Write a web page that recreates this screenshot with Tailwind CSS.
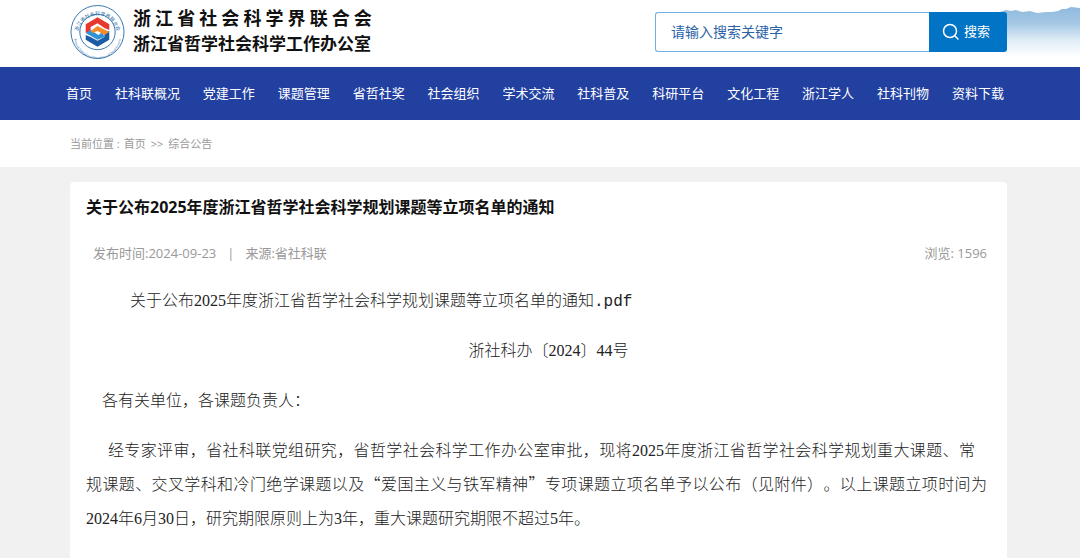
<!DOCTYPE html>
<html lang="zh-CN">
  <head>
    <meta charset="UTF-8" />
    <meta name="viewport" content="width=device-width, initial-scale=1.0" />
    <title>关于公布2025年度浙江省哲学社会科学规划课题等立项名单的通知</title>
    <script src="https://cdn.jsdelivr.net/npm/@tailwindcss/browser@4"></script>
  </head>
  <body class="min-h-screen flex flex-col bg-[#f1f1f1] text-[#111] font-['Open_Sans','Noto_Sans_CJK_SC',sans-serif]">
    <header class="relative bg-white h-[67px] pl-[70px] pr-[73px] flex justify-between">
      <!-- ink-wash hills behind the search box -->
      <svg class="absolute right-0 top-0" width="100" height="67" viewBox="0 0 100 67" aria-hidden="true">
        <defs>
          <linearGradient id="hill" x1="0" y1="0" x2="0" y2="1">
            <stop offset="0" stop-color="#8fbade" />
            <stop offset="0.3" stop-color="#a5c8e4" />
            <stop offset="0.6" stop-color="#dfecf7" />
            <stop offset="0.9" stop-color="#ffffff" />
          </linearGradient>
        </defs>
        <path fill="url(#hill)" d="M20 12 L26 10 L31 11 L36 10 L42 12 L50 11 L57 13 L66 12 L72 12 L78 11 L82 9 L86 9 L91 7 L100 8 V62 H20 Z" />
      </svg>

      <a href="#" class="relative flex gap-2 h-[60px] pt-1">
        <svg width="55" height="56" viewBox="0 0 56 56" aria-hidden="true">
          <circle cx="28" cy="28" r="27" fill="#fff" stroke="#3577ad" stroke-width="1" />
          <circle cx="28" cy="28" r="18" fill="none" stroke="#3577ad" stroke-width="1" />
          <path id="arcTop" d="M8 31 A20 20 0 1 1 48 31" fill="none" />
          <path id="arcBottom" d="M4 31 A24 24 0 0 0 52 31" fill="none" />
          <text class="font-['Noto_Sans_CJK_SC',sans-serif] text-[5px]" fill="#2a6aa5"><textPath href="#arcTop" startOffset="50%" text-anchor="middle">浙江省社会科学界联合会</textPath></text>
          <text class="font-['Liberation_Serif',serif] text-[3px]" fill="#2a6aa5"><textPath href="#arcBottom" startOffset="50%" text-anchor="middle">Zhejiang Federation of Humanities and Social Sciences</textPath></text>
          <path fill="#e5392f" d="M28 13 L40 20 V26 L35 24 L28 19 L21 23 V27 L16 29 V20 Z" />
          <path fill="#1c5ca6" d="M28 43 L16 36 V31 L21 33 L28 37 L35 33 V29 L40 27 V36 Z" />
          <path fill="#2f93d6" d="M16 29 L21 26 L29 31 L33 28 L35 33 L28 36 Z" />
          <path fill="#f58b2a" d="M21 27 L28 22 L40 28 L35 31 L28 27 L23 29 Z" />
        </svg>
        <span class="flex flex-col text-[#111] font-bold font-['Noto_Sans_CJK_SC',sans-serif] whitespace-nowrap">
          <span class="text-[18px] leading-[26px]">浙 江 省 社 会 科 学 界 联 合 会</span>
          <span class="text-[17px] leading-[25px]">浙江省哲学社会科学工作办公室</span>
        </span>
      </a>

      <form class="relative mt-3 w-[352px] h-10 flex" onsubmit="return false">
        <input type="text" aria-label="搜索关键字" placeholder="请输入搜索关键字" class="flex-1 min-w-0 px-[15px] text-sm bg-white border border-r-0 border-[#6fb2e0] rounded-l-[3px] placeholder:text-[#2a62a8] focus:outline-none" />
        <button type="submit" class="w-[78px] pr-1 flex items-center justify-center gap-1 bg-[#0274c5] text-white text-[13px] rounded-r-[3px]">
          <svg width="18" height="18" viewBox="0 0 18 18" fill="none" stroke="currentColor" stroke-width="1.5" stroke-linecap="round" aria-hidden="true">
            <circle cx="8" cy="8" r="6.5" />
            <path d="M13 13 L16 16" />
          </svg>
          搜索
        </button>
      </form>
    </header>

    <nav class="bg-[#22409f] h-[53px] pl-[66px] pr-[76px] flex items-center justify-between text-[13px] text-white whitespace-nowrap">
      <a href="#">首页</a>
      <a href="#">社科联概况</a>
      <a href="#">党建工作</a>
      <a href="#">课题管理</a>
      <a href="#">省哲社奖</a>
      <a href="#">社会组织</a>
      <a href="#">学术交流</a>
      <a href="#">社科普及</a>
      <a href="#">科研平台</a>
      <a href="#">文化工程</a>
      <a href="#">浙江学人</a>
      <a href="#">社科刊物</a>
      <a href="#">资料下载</a>
    </nav>

    <div class="bg-white h-[47px] pt-px px-[70px] flex items-center gap-1 text-[11px] text-[#999]">
      <span>当前位置 :</span>
      <a href="#">首页</a>
      <span class="px-px">&gt;&gt;</span>
      <a href="#">综合公告</a>
    </div>

    <main class="flex-1 flex flex-col pt-[15px] pl-[70px] pr-[73px]">
      <article class="flex-1 bg-white rounded-t-[4px] px-4">
        <h1 class="pt-[13px] text-base leading-6 font-bold">关于公布2025年度浙江省哲学社会科学规划课题等立项名单的通知</h1>
        <div class="mt-[22px] pl-[7px] pr-1 flex text-[13px] leading-6 text-[#999]">
          <span>发布时间:2024-09-23</span>
          <span class="mx-[11px]">|</span>
          <span>来源:省社科联</span>
          <span class="ml-auto">浏览: 1596</span>
        </div>

        <div class="pt-[19px] pr-1 text-base leading-[34px] text-[#222] font-light [text-spacing-trim:space-all] font-['Liberation_Serif','Noto_Sans_CJK_SC',serif]">
          <p class="pl-11"><a href="#">关于公布2025年度浙江省哲学社会科学规划课题等立项名单的通知<span class="leading-none font-['Liberation_Mono',monospace]">.pdf</span></a></p>
          <p class="mt-4 pl-6 text-center">浙社科办〔2024〕44号</p>
          <p class="mt-4 pl-4">各有关单位，各课题负责人：</p>
          <p class="mt-4">
            <span class="block pl-[22px] pr-3 [text-align-last:justify]">经专家评审，省社科联党组研究，省哲学社会科学工作办公室审批，现将2025年度浙江省哲学社会科学规划重大课题、常</span>
            <span class="block [text-align-last:justify]">规课题、交叉学科和冷门绝学课题以及<span class="leading-none font-['Noto_Sans_CJK_SC',sans-serif]">“爱国主义与铁军精神”</span>专项课题立项名单予以公布（见附件）。以上课题立项时间为</span>
            <span class="block">2024年6月30日，研究期限原则上为3年，重大课题研究期限不超过5年。</span>
          </p>
        </div>
      </article>
    </main>
  </body>
</html>
